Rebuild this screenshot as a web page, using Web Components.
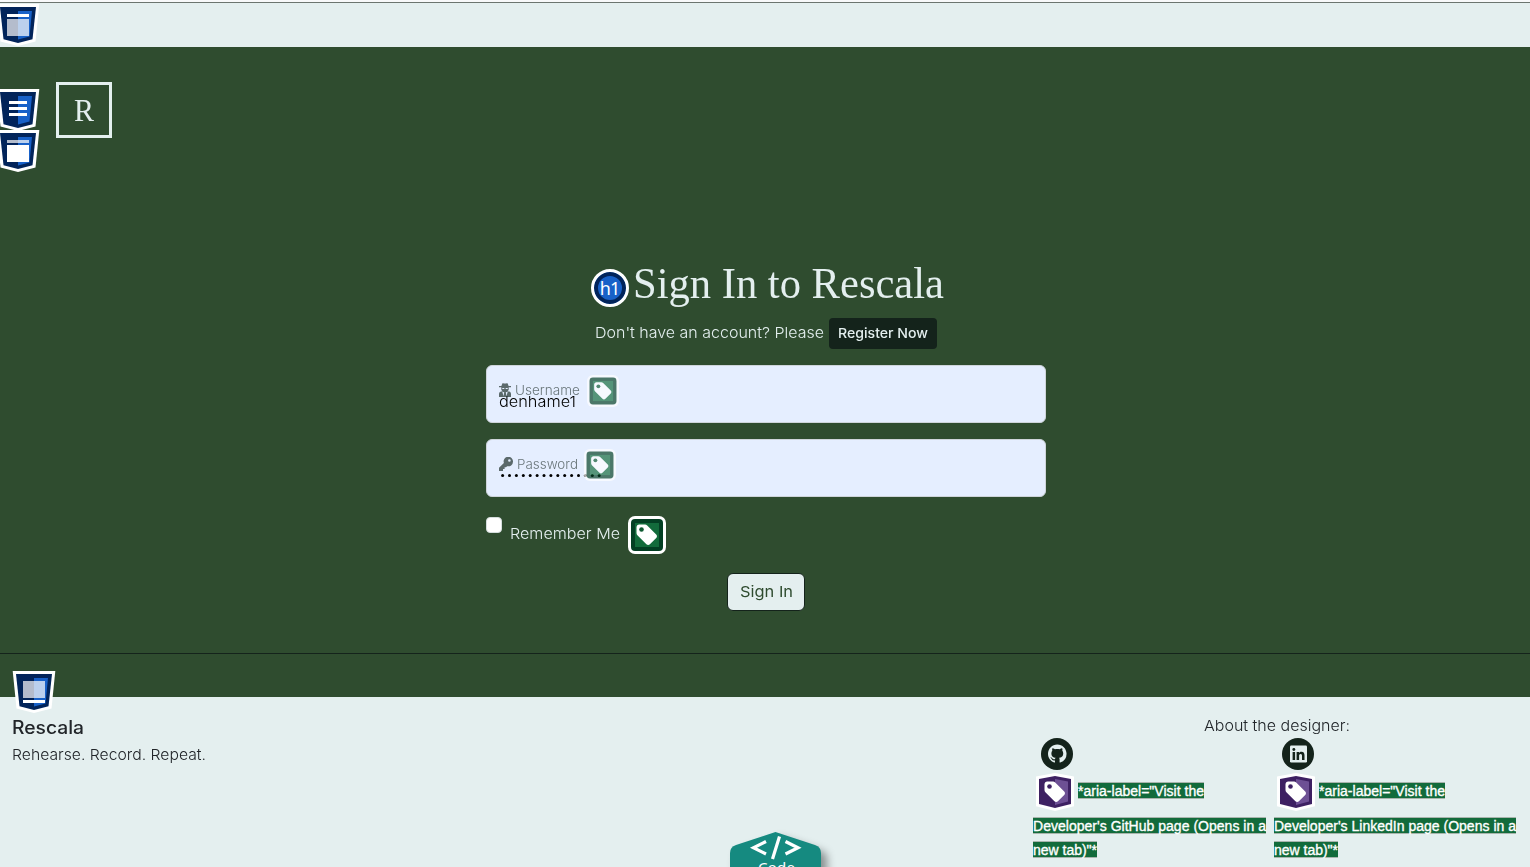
<!DOCTYPE html>
<html lang="en">
<head>
<meta charset="utf-8">
<title>Sign In to Rescala</title>
<style>
html,body{margin:0;height:100%;overflow:hidden}
body{font-family:Inter,"Liberation Sans",sans-serif;font-weight:300;background:#e4efef}
</style>
</head>
<body>
<rescala-app></rescala-app>
<script>
const define=(name,html,extra)=>{
  const t=document.createElement('template');t.innerHTML=html;
  customElements.define(name,class extends HTMLElement{
    connectedCallback(){
      if(this.shadowRoot)return;
      this.attachShadow({mode:'open'}).append(t.content.cloneNode(true));
      if(extra)extra(this,this.shadowRoot);
    }
  });
};

/* A single line of text, widened or tracked so that it fills the width in its "w" attribute. */
define('fit-text','<style>:host{display:inline-block;white-space:pre;line-height:inherit;flex:none;text-align:left}span{display:inline-block;transform-origin:0 50%}</style><span><slot></slot></span>',(el,root)=>{
  const w=+el.getAttribute('w');
  const span=root.querySelector('span');
  const natural=span.getBoundingClientRect().width;
  if(el.hasAttribute('track'))el.style.letterSpacing=((w-natural)/el.textContent.length)+'px';
  else span.style.transform='scaleX('+w/natural+')';
  el.style.width=w+'px';
});

const tagPath='M8.5 11.2V17c0 .9.3 1.6.9 2.200l9 9c1 1 2.500 1 3.500 0l6.300-6.300c1-1 1-2.500 0-3.500l-9-9c-.6-.6-1.400-.9-2.200-.9h-5.800c-1.500 0-2.700 1.200-2.700 2.700z';

define('landmark-badge','<style>:host{display:block;width:44px;height:42px}svg{display:block}</style><div></div>',(el,root)=>{
  const inner={
    header:'<path fill="#fff" d="M11 10h22v3H11z"/><path fill="#b4bccc" d="M11 15h11v17H11z"/><path fill="#bbd0ed" d="M22 15h11v17H22z"/>',
    nav:'<path fill="#fff" d="M13 12h18v3H13zM13 18h18v3H13zM13 24h18v3H13z"/>',
    main:'<path fill="#b4bccc" d="M11 10h11v3H11z"/><path fill="#bbd0ed" d="M22 10h11v3H22z"/><path fill="#fff" d="M11 15h22v17H11z"/>',
    footer:'<path fill="#b4bccc" d="M11 10h11v17H11z"/><path fill="#bbd0ed" d="M22 10h11v17H22z"/><path fill="#fff" d="M11 29h22v3H11z"/>'
  }[el.getAttribute('kind')];
  root.querySelector('div').innerHTML='<svg width="44" height="42" viewBox="0 0 44 42"><path fill="#fff" d="M.7 0h42.600L39.500 37.500 22 42 4.500 37.500z"/><path fill="#02245a" d="M4 3h36L36.500 35.300 22 39 7.500 35.300z"/><path fill="#1861c8" d="M22 7h14L33.500 32.500 22 35.500z"/>'+inner+'</svg>';
});

define('tag-badge','<style>:host{display:block;width:38px;height:38px;flex:none}svg{display:block;width:100%;height:100%}</style><svg viewBox="0 0 38 38"></svg>',(el,root)=>{
  const frame=el.getAttribute('kind')==='link'
    ?'<path fill="#fff" d="M0 3.500 19 0l19 3.500v29.800L19 38 0 33.300z"/><path fill="#3d2062" d="M3 6l16-3 16 3v25l-16 4L3 31z"/><path fill="#6d5094" d="M19 6l13 2.500v20L19 32z"/>'
    :'<rect width="38" height="38" rx="7" fill="#fff"/><rect x="3" y="3" width="32" height="32" rx="4" fill="#033f23"/><path fill="#126b3b" d="M7 7h24v24H7z"/>';
  const hole=el.getAttribute('kind')==='link'?'#3d2062':'#0d5930';
  root.querySelector('svg').innerHTML=frame+'<path fill="#fff" d="'+tagPath+'"/><circle cx="13.500" cy="13.500" r="2.300" fill="'+hole+'"/>';
});

define('heading-badge',`<style>:host{display:grid;place-items:center;box-sizing:border-box;width:38px;height:38px;border-radius:50%;background:#1861c8;border:3px solid #fff;box-shadow:inset 0 0 0 4px #02245a;color:#fff;font:400 18px/32px "Noto Sans",sans-serif;letter-spacing:-1px;flex:none}</style><span>h1</span>`);

define('site-header',`<style>
:host{display:block;box-sizing:border-box;height:47px;border-top:2px solid #f8f9fa;background:#e4efef;position:relative}
.rule{height:1px;background:#6c756f}
landmark-badge{position:absolute;left:-4px;top:2px}
</style><div class="rule"></div><landmark-badge kind="header"></landmark-badge>`);

define('site-logo',`<style>
:host{display:flex;align-items:center;justify-content:center;box-sizing:border-box;width:56px;height:56px;border:3px solid #e4efef;color:#e4efef;font:400 32px/50px "Liberation Serif",serif}
</style><fit-text w="20">R</fit-text>`);

define('text-field',`<style>
:host{display:block;box-sizing:border-box;height:58px;border:1px solid #ced4da;border-radius:6px;background:#e5eeff;position:relative}
.value{position:absolute;left:12px;top:24px;color:#000;font-size:15px;line-height:24px}
.label{position:absolute;left:12px;top:7px;height:36px;display:flex;align-items:center;opacity:.68;color:#2c3a38;font-size:13px;line-height:20px}
.label>svg,.label fit-text{position:relative;top:-1px}
.label fit-text{margin-left:4px}
svg{display:block;flex:none}
tag-badge{width:32px;height:32px}
</style><div class="value"></div><div class="label"></div>`,(el,root)=>{
  const v=root.querySelector('.value'),l=root.querySelector('.label');
  if(el.getAttribute('kind')==='user'){
    v.innerHTML='<fit-text w="77">denhame1</fit-text>';
    l.innerHTML='<svg width="12" height="14" viewBox="0 0 12 14"><path fill="#1b2b26" d="M3.300.4C4.300-.2 5 .5 6 .5S7.700-.2 8.700.4L9.600 3H12v1.200H9.700v2.600q-.5 1.200-1.500 1.500Q12 8.500 12 11v3H0v-3q0-2.500 3.800-2.700-1-.3-1.500-1.500V4.200H0V3h2.400z"/><path fill="#e5eeff" d="M3.300 5h2v1h-2zM6.700 5h2v1h-2zM3.300 8.800l1.900.4-.7 4zM8.700 8.800l-1.900.4.7 4z"/></svg><fit-text w="65">Username</fit-text><tag-badge style="margin-left:7px"></tag-badge>';
  }else{
    v.innerHTML='<svg width="104" height="24">'+Array.from({length:15},(_,i)=>'<circle cx="'+(3.600+i*6.900)+'" cy="11.500" r="1.500"/>').join('')+'</svg>';
    l.innerHTML='<svg width="14" height="14" viewBox="0 0 14 14"><path fill="#1b2b26" fill-rule="evenodd" d="M14 4.700A4.700 4.700 0 0 1 8.100 9.200L7 10.300H5.600V12H4v2H0v-3.200L4.900 6A4.700 4.700 0 1 1 14 4.700zM10.400 2.200a1.300 1.300 0 1 0 0 2.600 1.300 1.300 0 0 0 0-2.600z"/></svg><fit-text w="61">Password</fit-text><tag-badge style="margin-left:6px"></tag-badge>';
  }
});

define('sign-in-form',`<style>
:host{display:block;width:560px;color:#e4efef}
h1{display:flex;align-items:flex-start;justify-content:center;gap:4px;margin:0 0 0 2px;height:58px;padding-top:9px;box-sizing:border-box;font:400 44px/48px "Liberation Serif",serif}
h1 fit-text{margin-top:-9px}
.register{display:flex;justify-content:center;gap:5px;height:31px;font-size:15px;line-height:30px}
.register b{box-sizing:border-box;padding:0 9px;width:108px;border-radius:4px;background:#14231b;font-weight:500;font-size:13px;line-height:31px}
text-field{margin-top:16px}
.remember{display:flex;height:38px;margin-top:19px;font-size:15px;line-height:36px}
.box{width:16px;height:16px;box-sizing:border-box;border:1px solid #d5dddd;border-radius:4px;background:#fff;margin:1px 8px 0 0}
.remember tag-badge{margin-left:8px}
button{display:block;margin:19px 0 0 241px;width:78px;height:38px;padding:0;border:1px solid #14231b;border-radius:6px;background:#e4efef;color:#2f4c2f;font:400 15px/34px Inter,sans-serif}
</style>
<h1><heading-badge></heading-badge><fit-text w="311">Sign In to Rescala</fit-text></h1>
<div class="register"><fit-text w="229">Don't have an account? Please</fit-text><b><fit-text w="90">Register Now</fit-text></b></div>
<text-field kind="user"></text-field>
<text-field kind="key"></text-field>
<div class="remember"><span class="box"></span><fit-text w="110">Remember Me</fit-text><tag-badge></tag-badge></div>
<button><fit-text w="53">Sign In</fit-text></button>`);

define('page-main',`<style>
:host{display:block;box-sizing:border-box;height:650px;padding-top:35px;background:#2f4c2f;position:relative}
site-logo{margin-left:56px}
sign-in-form{margin:122px auto 0 486px}
.nav{position:absolute;left:-4px;top:42px}
.main{position:absolute;left:-4px;top:83px}
hr{border:0;height:1px;margin:42px 0 0;background:#14231b}
</style>
<site-logo></site-logo><landmark-badge class="nav" kind="nav"></landmark-badge><landmark-badge class="main" kind="main"></landmark-badge>
<sign-in-form></sign-in-form><hr>`);

define('social-link',`<style>
:host{display:block;flex:none}
.icon{display:block;margin-left:8px}
.row{display:flex;align-items:center;height:38px;margin:3px 0 0 3px}
.row fit-text{margin:-4px 0 0 4px}
.line{height:24px;display:flex;align-items:center}
.line.first{margin-top:2px}
fit-text{box-sizing:border-box;height:17px;background:#126b3b;border-top:1px solid #a9b5ad;border-bottom:1px solid #a9b5ad;color:#fff;font:400 14px/16px "Liberation Sans",Arial,sans-serif;-webkit-text-stroke:.35px #fff}
</style>
<svg class="icon" width="32" height="32" viewBox="0 0 32 32"></svg>
<div class="row"><tag-badge kind="link"></tag-badge><fit-text track w="126">*aria-label="Visit the</fit-text></div>
<div class="line first"></div><div class="line"><fit-text track w="64">new tab)"*</fit-text></div>`,(el,root)=>{
  const gh=el.getAttribute('site')==='GitHub';
  root.querySelector('svg').innerHTML='<circle cx="16" cy="16" r="16" fill="#14231b"/>'+(gh
    ?'<g transform="translate(7 6.500) scale(1.160)"><path fill="#e4efef" d="M8 0C3.580 0 0 3.580 0 8c0 3.540 2.290 6.530 5.470 7.590.4.070.55-.17.55-.38 0-.19-.010-.82-.010-1.490-2.010.37-2.530-.49-2.690-.94-.09-.23-.48-.94-.82-1.130-.28-.15-.68-.52-.010-.53.63-.010 1.080.58 1.230.82.72 1.210 1.870.87 2.330.66.070-.52.28-.87.51-1.070-1.780-.2-3.640-.89-3.640-3.950 0-.87.31-1.590.82-2.150-.08-.2-.36-1.020.08-2.120 0 0 .67-.21 2.200.82.64-.18 1.320-.27 2-.27s1.360.09 2 .27c1.530-1.040 2.200-.82 2.200-.82.44 1.100.16 1.920.08 2.120.51.56.82 1.270.82 2.150 0 3.070-1.870 3.750-3.650 3.950.29.25.54.73.54 1.480 0 1.070-.010 1.930-.010 2.200 0 .21.15.46.55.38A8 8 0 0 0 16 8c0-4.420-3.580-8-8-8z"/></g>'
    :'<rect x="8" y="7.500" width="17" height="17" rx="1.200" fill="#e4efef"/><path fill="#14231b" d="M10.600 14h2.500v8h-2.500zM14.600 14H17v1.100c.5-.8 1.300-1.300 2.500-1.300 2.400 0 3 1.600 3 3.700V22H20v-4c0-1-.1-2-1.400-2s-1.500 1-1.500 2v4h-2.500z"/><circle cx="11.850" cy="11.500" r="1.450" fill="#14231b"/>');
  root.querySelector('.first').innerHTML=gh?'<fit-text track w="233">Developer\'s GitHub page (Opens in a</fit-text>':'<fit-text track w="242">Developer\'s LinkedIn page (Opens in a</fit-text>';
});

define('code-badge',`<style>
:host{display:block;width:120px;height:60px}svg{display:block;overflow:visible}
</style><svg width="120" height="60" viewBox="0 0 120 60"><path d="M45.500 0 85 13q6 2 6 8v60H0V21q0-6 6-8z" fill="#158a80" style="filter:drop-shadow(6px 6px 4px rgba(0,0,0,.4))"/><path d="M36 9.500 23.500 15.800 36 22M55.500 9.500 68 15.800 55.500 22M49.500 4.500 42.500 27" fill="none" stroke="#fff" stroke-width="3.200"/><text x="28" y="41" textLength="37" fill="#fff" font-family="Noto Sans" font-size="15" font-weight="400">Code</text></svg>`);

define('site-footer',`<style>
:host{display:flex;justify-content:space-between;box-sizing:border-box;height:170px;padding:0 14px 0 12px;background:#e4efef;color:#212529;position:relative}
.badge{position:absolute;left:12px;top:-26px}
.brand{padding-top:18px}
.brand fit-text{display:block}
.name{font-size:18px;font-weight:450;line-height:26px}
.motto{font-size:15px;line-height:24px;margin-top:2px}
.about{width:478px;margin:0 5px 0 auto;padding-top:17px;flex:none}
.title{display:block;margin:0 0 0 171px;font-size:15px;line-height:24px}
.links{display:flex;gap:8px;width:483px}
code-badge{position:absolute;left:730px;top:135px}
</style>
<landmark-badge class="badge" kind="footer"></landmark-badge>
<div class="brand"><fit-text class="name" w="72">Rescala</fit-text><fit-text class="motto" w="194">Rehearse. Record. Repeat.</fit-text></div>
<code-badge></code-badge>
<div class="about"><fit-text class="title" w="146">About the designer:</fit-text><div class="links"><social-link site="GitHub"></social-link><social-link site="LinkedIn"></social-link></div></div>`);

define('rescala-app',`<style>:host{display:block;height:867px;overflow:hidden}</style>
<site-header></site-header><page-main></page-main><site-footer></site-footer>`);
</script>
</body>
</html>
